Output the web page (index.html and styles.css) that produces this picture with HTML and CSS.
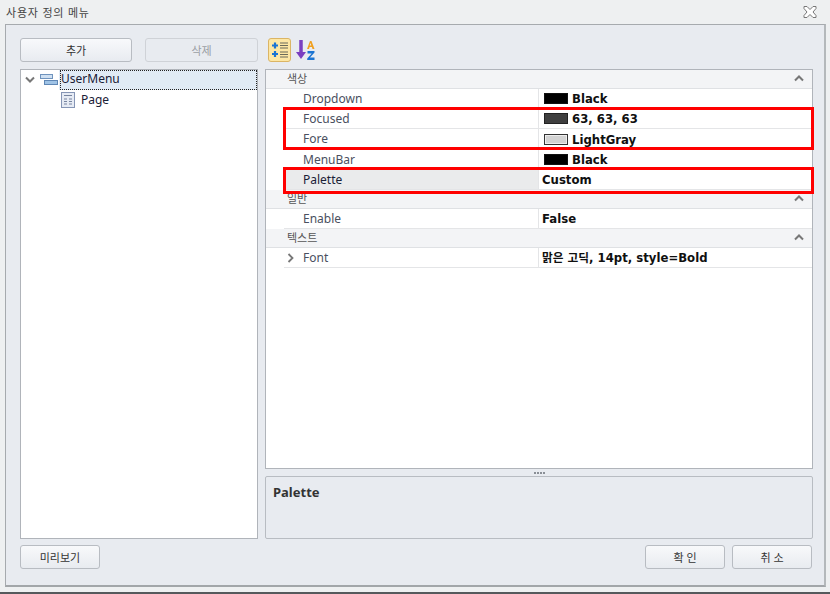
FILE: index.html
```html
<!DOCTYPE html>
<html lang="ko">
<head>
<meta charset="utf-8">
<title>사용자 정의 메뉴</title>
<link rel="stylesheet" href="styles.css">
</head>
<body>
<div class="window">
  <header class="titlebar">
    <span class="title">사용자 정의 메뉴</span>
    <svg class="close" width="14" height="12" viewBox="0 0 14 12"><path d="M1 .5h3L7 3.500 10 .5h3v2L10 6l3 3.500v2h-3L7 8.500 4 11.500H1v-2L4 6 1 2.500z" fill="#fff" stroke="#777" stroke-width="1"/></svg>
  </header>
  <main class="panel">
    <div class="columns">
      <section class="left">
        <div class="btn-row">
          <button class="btn wide">추가</button>
          <button class="btn wide disabled">삭제</button>
        </div>
        <div class="tree">
          <div class="node root">
            <svg class="chev" width="10" height="8" viewBox="0 0 10 8"><path d="M1 1.500l4 4 4-4" fill="none" stroke="#777" stroke-width="2"/></svg>
            <svg class="node-icon" width="18" height="14" viewBox="0 0 18 14"><rect x="0.500" y="1.500" width="12" height="4" fill="#cfe0f2" stroke="#6f93bd"/><rect x="4.500" y="7.500" width="13" height="4" fill="#9fc3e6" stroke="#5f87b5"/></svg>
            <span class="node-label focus">UserMenu</span>
          </div>
          <div class="node child">
            <svg class="page-icon" width="14" height="16" viewBox="0 0 14 16"><rect x="0.500" y="0.500" width="13" height="15" fill="#e6ebf4" stroke="#8595b5"/><path d="M3 3.500h8M3 7h3M8 7h3M3 9.500h3M8 9.500h3M3 12h3M8 12h3" stroke="#76849f" stroke-width="1.200"/></svg>
            <span class="node-label">Page</span>
          </div>
        </div>
      </section>
      <section class="right">
        <div class="toolbar">
          <span class="tool active">
            <svg width="20" height="18" viewBox="0 0 20 18"><path d="M5 1.500v6M2 4.500h6M5 10v6M2 13h6" stroke="#1b74d2" stroke-width="2.200"/><path d="M10 2h8M10 4.500h8M10 7h8M10 11h8M10 13.500h8M10 16h8" stroke="#6b6b5a" stroke-width="1.200"/></svg>
          </span>
          <svg class="sort" width="20" height="22" viewBox="0 0 20 22"><path d="M5 1v14" stroke="#7a3fc0" stroke-width="3.500"/><path d="M0 13h10l-5 7z" fill="#7a3fc0"/><path d="M11 10l3-8h1.500l3 8h-2l-.6-2h-2.300l-.6 2zM13.700 6.500h1.600L14.500 4z" fill="#f0a020"/><path d="M11.500 12h7v1.600l-4.500 5h4.500V21h-7.300v-1.600l4.500-5h-4.200z" fill="#1b74d2"/></svg>
        </div>
        <div class="grid">
          <div class="cat"><span>색상</span><svg class="up" width="10" height="7" viewBox="0 0 10 7"><path d="M1 5.500l4-4 4 4" fill="none" stroke="#777" stroke-width="2"/></svg></div>
          <div class="row"><div class="name">Dropdown</div><div class="val"><i class="sw black"></i>Black</div></div>
          <div class="row"><div class="name">Focused</div><div class="val"><i class="sw dark"></i>63, 63, 63</div></div>
          <div class="row tall"><div class="name">Fore</div><div class="val"><i class="sw light"></i>LightGray</div></div>
          <div class="row"><div class="name">MenuBar</div><div class="val"><i class="sw black"></i>Black</div></div>
          <div class="row selected"><div class="name">Palette</div><div class="val">Custom</div></div>
          <div class="cat"><span>일반</span><svg class="up" width="10" height="7" viewBox="0 0 10 7"><path d="M1 5.500l4-4 4 4" fill="none" stroke="#777" stroke-width="2"/></svg></div>
          <div class="row"><div class="name">Enable</div><div class="val">False</div></div>
          <div class="cat"><span>텍스트</span><svg class="up" width="10" height="7" viewBox="0 0 10 7"><path d="M1 5.500l4-4 4 4" fill="none" stroke="#777" stroke-width="2"/></svg></div>
          <div class="row"><div class="name"><svg class="expand" width="7" height="10" viewBox="0 0 7 10"><path d="M1.500 1l4 4-4 4" fill="none" stroke="#777" stroke-width="1.800"/></svg>Font</div><div class="val">맑은 고딕, 14pt, style=Bold</div></div>
          <div class="mark mark-a"></div>
          <div class="mark mark-b"></div>
        </div>
        <div class="splitter"><i></i><i></i><i></i><i></i></div>
        <div class="help">Palette</div>
      </section>
    </div>
    <footer class="footer">
      <button class="btn">미리보기</button>
      <div class="actions">
        <button class="btn">확 인</button>
        <button class="btn">취 소</button>
      </div>
    </footer>
  </main>
  <div class="bottom-line"></div>
</div>
</body>
</html>
```

FILE: styles.css
```css
* { box-sizing: border-box; }
html, body { margin: 0; padding: 0; }
body {
  width: 830px;
  height: 594px;
  overflow: hidden;
  font-family: "Noto Sans", "Noto Sans CJK KR", sans-serif;
  font-size: 12px;
  color: #1e2430;
  background: #eef0f1;
}
.window { display: flex; flex-direction: column; height: 594px; }
.titlebar {
  height: 24px;
  flex: none;
  display: flex;
  align-items: center;
  justify-content: space-between;
  padding: 0 13px 1px 6px;
}
.title { font-size: 11px; color: #444; letter-spacing: 0.8px; }
.panel {
  height: 563px;
  flex: none;
  margin: 0 4px 0 5px;
  padding: 13px 11px 15px 14px;
  background: #e8ebf0;
  border: 1px solid #a6aaae;
  border-bottom: 2px solid #a2a6a9;
  border-right: 2px solid #b4b8bb;
  display: flex;
  flex-direction: column;
}
.columns { display: flex; gap: 7px; height: 501px; flex: none; }
.left { width: 238px; flex: none; display: flex; flex-direction: column; }
.right { width: 548px; flex: none; display: flex; flex-direction: column; }
.btn-row { display: flex; gap: 13px; height: 24px; flex: none; margin-bottom: 7px; }
.btn {
  width: 80px;
  height: 24px;
  padding: 0;
  font-family: inherit;
  font-size: 11px;
  color: #333;
  background: linear-gradient(#f8f9fb, #e8ebf0);
  border: 1px solid #b8bcc2;
  border-radius: 3px;
}
.btn.wide { width: 112px; }
.btn-row .wide + .wide { width: 113px; }
.btn.disabled { color: #9a9ea4; background: #e8ebf0; border-color: #cfd2d7; }
.tree {
  flex: 1;
  background: #fff;
  border: 1px solid #b0b4ba;
}
.node { display: flex; align-items: center; height: 20px; font-size: 12px; color: #1a2036; }
.root { padding-left: 4px; background: linear-gradient(90deg, #fff 38px, #e1ebf5 38px); }
.chev { margin-right: 5px; }
.node-icon { margin-right: 2px; }
.node-label { line-height: 18px; padding: 0 1px; }
.focus { flex: 1; outline: 1px dotted #222; outline-offset: -1px; height: 20px; }
.child { padding-left: 40px; }
.page-icon { margin-right: 5px; }
.toolbar { height: 31px; flex: none; display: flex; align-items: flex-start; gap: 5px; padding-left: 3px; }
.tool {
  width: 23px;
  height: 24px;
  display: flex;
  align-items: center;
  justify-content: center;
  background: #fde7a4;
  border: 1px solid #dbb565;
  border-radius: 3px;
}
.sort { margin-top: 1px; }
.grid {
  position: relative;
  height: 400px;
  flex: none;
  background: #fff;
  border: 1px solid #b0b4ba;
}
.cat {
  height: 19px;
  background: #f3f4f6;
  border-bottom: 1px solid #dfe1e4;
  display: flex;
  align-items: center;
  justify-content: space-between;
  padding: 0 8px 2px 21px;
  font-size: 11px;
  color: #555;
}
.row {
  height: 20px;
  display: flex;
  margin-left: 18px;
  border-bottom: 1px solid #e4e5e7;
  line-height: 20px;
}
.row.tall { height: 21px; }
.name {
  width: 255px;
  flex: none;
  padding-left: 19px;
  border-right: 1px solid #e4e5e7;
  color: #4a5060;
  position: relative;
}
.expand { position: absolute; left: 3px; top: 5px; }
.val {
  flex: 1;
  display: flex;
  align-items: center;
  padding: 1px 0 0 3px;
  font-family: "DejaVu Sans", "Noto Sans CJK KR", sans-serif;
  font-weight: 700;
  font-size: 11.7px;
  color: #101010;
  white-space: pre;
}
.sw {
  display: block;
  width: 24px;
  height: 11px;
  margin: -1px 4px 0 2px;
  border: 1px solid #111;
  flex: none;
}
.black { background: #000; }
.dark { background: #3f3f3f; border-color: #222; }
.light { background: #d3d3d3; border-color: #333; box-shadow: inset 0 0 0 1px #eee; }
.selected .name { background: #eaebec; color: #1a2036; }
.mark { position: absolute; left: 17px; right: -2px; border: 3px solid #f00; pointer-events: none; }
.mark-a { top: 37px; height: 43px; }
.mark-b { top: 97px; height: 27px; }
.splitter { height: 7px; flex: none; display: flex; justify-content: center; align-items: center; gap: 1px; }
.splitter i { width: 2px; height: 2px; background: #8a8f96; }
.help {
  flex: 1;
  border: 1px solid #b8bcc2;
  border-radius: 2px;
  padding: 6px 7px;
  font-weight: 700;
  font-size: 13px;
  color: #333;
}
.footer { display: flex; justify-content: space-between; margin-top: 6px; padding-right: 1px; height: 24px; flex: none; }
.actions { display: flex; gap: 7px; }
.bottom-line { height: 2px; margin-top: 5px; background: #55595c; flex: none; }
```
